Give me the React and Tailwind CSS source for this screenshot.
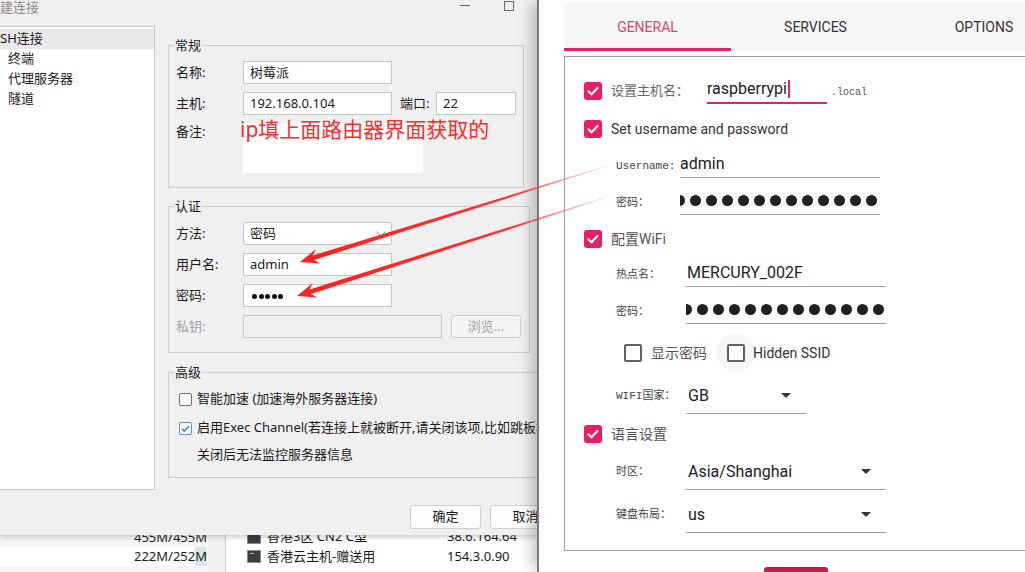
import React from "react";

const winFont = "font-['Noto_Sans','Noto_Sans_CJK_SC',sans-serif]";
const piFont = "font-['Roboto','Noto_Sans_CJK_SC',sans-serif]";
const monoFont = "font-['Liberation_Mono','Noto_Sans_CJK_SC',monospace]";

function arrowPoints(sx, sy, tx, ty) {
  const dx = sx - tx;
  const dy = sy - ty;
  const len = Math.hypot(dx, dy);
  const ux = dx / len;
  const uy = dy / len;
  const nx = -uy;
  const ny = ux;
  const p = (a, b) => [tx + ux * a + nx * b, ty + uy * a + ny * b];
  return [p(0, 0), p(19, 7.5), p(14, 2.3), p(len, 0.5), p(len, -0.5), p(14, -2.3), p(19, -7.5)]
    .map(([x, y]) => `${x.toFixed(1)},${y.toFixed(1)}`)
    .join(" ");
}

const arrows = [
  { id: "a1", sx: 607, sy: 166, tx: 300, ty: 262 },
  { id: "a2", sx: 607, sy: 197, tx: 297, ty: 296 },
];

function Arrows() {
  return (
    <svg className="pointer-events-none absolute left-0 top-0 z-20" width="1025" height="572">
      <defs>
        {arrows.map((a) => (
          <linearGradient key={a.id} id={a.id} gradientUnits="userSpaceOnUse" x1={a.tx} y1={a.ty} x2={a.sx} y2={a.sy}>
            <stop offset="0" stopColor="#ff1f1f" stopOpacity="1" />
            <stop offset="0.7" stopColor="#ff2a2a" stopOpacity="0.95" />
            <stop offset="1" stopColor="#ff6b6b" stopOpacity="0.15" />
          </linearGradient>
        ))}
      </defs>
      {arrows.map((a) => (
        <polygon key={a.id} points={arrowPoints(a.sx, a.sy, a.tx, a.ty)} fill={`url(#${a.id})`} />
      ))}
    </svg>
  );
}

function WinCheck({ checked }) {
  return (
    <span
      className={
        checked
          ? "flex h-[13px] w-[13px] shrink-0 items-center justify-center rounded-[2px] border border-[#5b8fd0] bg-white"
          : "flex h-[13px] w-[13px] shrink-0 items-center justify-center rounded-[2px] border border-[#6e6e6e] bg-white"
      }
    >
      {checked && (
        <svg width="11" height="11" viewBox="0 0 11 11">
          <path d="M2 5.8l2.3 2.4L9 3" fill="none" stroke="#2f78d6" strokeWidth="1.4" />
        </svg>
      )}
    </span>
  );
}

function FormRow({ label, children, muted, className = "" }) {
  return (
    <div className={`flex h-[23px] items-center ${className}`}>
      <span className={`w-[74px] shrink-0 pl-[7px] ${muted ? "text-[#a3a3a3]" : ""}`}>{label}</span>
      {children}
    </div>
  );
}

function Dialog() {
  return (
    <div className="relative z-[1] flex h-[535px] flex-col bg-[#f0f0f0] shadow-[0_2px_5px_rgba(0,0,0,0.2)]">
      <div className="flex h-[26px] items-start">
        <span className="leading-[15px] text-[#8a8a8a]">建连接</span>
        <span className="ml-auto mt-[5px] h-px w-[10px] bg-[#666]" />
        <span className="ml-[34px] mr-[23px] mt-[1px] h-[10px] w-[10px] border border-[#666]" />
      </div>

      <div className="flex">
        <div className="h-[464px] w-[155px] shrink-0 border-y border-r border-[#c8c8c8] bg-white pt-[2px]">
          <div className="flex h-[20px] items-center bg-[#e9e9e9]">SH连接</div>
          <div className="flex h-[20px] items-center pl-[8px]">终端</div>
          <div className="flex h-[20px] items-center pl-[8px]">代理服务器</div>
          <div className="flex h-[20px] items-center pl-[8px]">隧道</div>
        </div>

        <div className="ml-[13px] flex min-w-0 flex-col">
          <fieldset className="mt-[10px] w-[356px] border border-[#cdcdcd] pb-[14px]">
            <legend className="ml-[5px] px-[1px] leading-[18px]">常规</legend>
            <div className="pt-[7px]">
              <FormRow label="名称:">
                <div className="flex h-[23px] w-[149px] items-center border border-[#c5c5c5] bg-white px-[6px]">树莓派</div>
              </FormRow>
              <FormRow label="主机:" className="mt-[8px]">
                <div className="flex h-[23px] w-[149px] items-center border border-[#c5c5c5] bg-white px-[6px]">192.168.0.104</div>
                <span className="ml-[8px] w-[36px]">端口:</span>
                <div className="flex h-[23px] w-[80px] items-center border border-[#c5c5c5] bg-white px-[6px]">22</div>
              </FormRow>
              <div className="mt-[8px] flex items-start">
                <span className="w-[74px] shrink-0 pl-[7px] leading-[17px]">备注:</span>
                <div className="h-[50px] w-[180px] bg-white" />
              </div>
            </div>
          </fieldset>

          <fieldset className="mt-[9px] w-[362px] border border-[#cdcdcd] pb-[14px]">
            <legend className="ml-[5px] px-[1px] leading-[18px]">认证</legend>
            <div className="pt-[7px]">
              <FormRow label="方法:">
                <div className="flex h-[23px] w-[149px] items-center justify-between rounded-[3px] border border-[#c5c5c5] bg-white pl-[6px] pr-[5px]">
                  <span>密码</span>
                  <svg width="10" height="6" viewBox="0 0 10 6">
                    <path d="M0.5 0.5L5 5l4.5-4.5" fill="none" stroke="#8a8a8a" strokeWidth="1" />
                  </svg>
                </div>
              </FormRow>
              <FormRow label="用户名:" className="mt-[8px]">
                <div className="flex h-[23px] w-[149px] items-center border border-[#c5c5c5] bg-white px-[6px]">admin</div>
              </FormRow>
              <FormRow label="密码:" className="mt-[8px]">
                <div className="flex h-[23px] w-[149px] items-center gap-[1.5px] border border-[#c5c5c5] bg-white px-[8px] pt-[1px]">
                  {Array.from({ length: 5 }).map((_, i) => (
                    <span key={i} className="h-[5px] w-[5px] rounded-full bg-[#111]" />
                  ))}
                </div>
              </FormRow>
              <FormRow label="私钥:" muted className="mt-[8px]">
                <div className="h-[23px] w-[199px] border border-[#c8c8c8] bg-[#f0f0f0]" />
                <div className="ml-[9px] flex h-[23px] w-[70px] items-center justify-center rounded-[3px] border border-[#cfcfcf] bg-[#f5f5f5] text-[#a3a3a3]">浏览...</div>
              </FormRow>
            </div>
          </fieldset>

          <fieldset className="mt-[10px] w-[375px] border border-[#cdcdcd] pb-[12px]">
            <legend className="ml-[5px] px-[1px] leading-[18px]">高级</legend>
            <div className="pt-[8px]">
              <div className="flex h-[20px] items-center gap-[5px] pl-[10px]">
                <WinCheck />
                <span className="whitespace-nowrap">智能加速 (加速海外服务器连接)</span>
              </div>
              <div className="mt-[9px] flex h-[20px] items-center gap-[5px] pl-[10px]">
                <WinCheck checked />
                <span className="whitespace-nowrap">启用Exec Channel(若连接上就被断开,请关闭该项,比如跳板机)</span>
              </div>
              <div className="mt-[7px] flex h-[20px] items-center pl-[28px]">关闭后无法监控服务器信息</div>
            </div>
          </fieldset>
        </div>
      </div>

      <div className="mt-[15px] flex gap-[9px] pl-[410px]">
        <div className="flex h-[24px] w-[71px] shrink-0 items-center justify-center rounded-[3px] border border-[#cfcfcf] bg-[#fdfdfd]">确定</div>
        <div className="flex h-[24px] w-[71px] shrink-0 items-center justify-center rounded-[3px] border border-[#cfcfcf] bg-[#fdfdfd]">取消</div>
      </div>
    </div>
  );
}

function TermIcon() {
  return (
    <span className="flex h-[13px] w-[14px] shrink-0 items-start border border-[#8a8a8a] bg-[#3e3e3e] p-[2px]">
      <span className="h-px w-[4px] bg-[#bbb]" />
    </span>
  );
}

function BackApp() {
  return (
    <div className="flex flex-1 bg-white">
      <div className="flex w-[208px] shrink-0 flex-col">
        <div className="flex h-[12px] items-end justify-end overflow-hidden bg-[#f6f6f6] pr-[1px]">
          <span className="leading-[20px]">455M/455M</span>
        </div>
        <div className="flex h-[19px] items-center justify-end pr-[1px]">
          222M/252<span className="bg-[#d6e9e4]">M</span>
        </div>
        <div className="flex-1 bg-[#f6f6f6]" />
      </div>
      <div className="w-[18px] shrink-0 border-r border-[#cfcfcf] bg-[#f0f0f0]" />
      <div className="flex flex-1 flex-col">
        <div className="flex h-[12px] items-end overflow-hidden pl-[21px]">
          <div className="flex h-[20px] items-center">
            <TermIcon />
            <span className="ml-[6px] w-[180px]">香港3区 CN2 C型</span>
            <span>38.6.164.64</span>
          </div>
        </div>
        <div className="flex h-[19px] items-center pl-[21px]">
          <TermIcon />
          <span className="ml-[6px] w-[180px]">香港云主机-赠送用</span>
          <span>154.3.0.90</span>
        </div>
      </div>
    </div>
  );
}

function PinkCheck() {
  return (
    <span className="flex h-[18px] w-[18px] shrink-0 items-center justify-center rounded-[3px] bg-[#e91e63]">
      <svg width="14" height="14" viewBox="0 0 14 14">
        <path d="M2.5 7.3l3 3 6-6.3" fill="none" stroke="#fff" strokeWidth="2.2" strokeLinecap="round" strokeLinejoin="round" />
      </svg>
    </span>
  );
}

function Dots({ offset }) {
  return (
    <div className="flex h-[28px] w-[200px] items-center overflow-hidden border-b border-[#9e9e9e]">
      <div className={`flex shrink-0 gap-[5px] ${offset}`}>
        {Array.from({ length: 13 }).map((_, i) => (
          <span key={i} className="h-[11px] w-[11px] shrink-0 rounded-full bg-[#212121]" />
        ))}
      </div>
    </div>
  );
}

function Caret() {
  return <span className="h-0 w-0 border-x-[5px] border-t-[5px] border-x-transparent border-t-[#333]" />;
}

function SubLabel({ children, w = "w-[64px]" }) {
  return <span className={`${w} shrink-0 text-[11px] text-[#444] ${monoFont}`}>{children}</span>;
}

function ImagerPanel() {
  return (
    <div className={`relative z-10 flex-1 overflow-hidden border-l-2 border-[#7b7b7b] bg-white pl-[25px] pt-[3px] text-[#212121] shadow-[-9px_0_12px_-3px_rgba(0,0,0,0.22)] ${piFont}`}>
      <div className="flex h-[48px] w-[520px] bg-[#f7f7f7] text-[14px]">
        <div className="flex w-[167px] shrink-0 items-center justify-center border-b-[3px] border-[#e91e63] pt-[3px] text-[#ec3d6e]">GENERAL</div>
        <div className="flex w-[169px] shrink-0 items-center justify-center border-b-[3px] border-transparent pt-[3px] text-[#333]">SERVICES</div>
        <div className="flex w-[168px] shrink-0 items-center justify-center border-b-[3px] border-transparent pt-[3px] text-[#333]">OPTIONS</div>
      </div>

      <div className="mt-[5px] h-[495px] w-[520px] border border-[#a0a0a0] pt-[15px]">
        <div className="flex h-[38px] items-center pl-[19px]">
          <PinkCheck />
          <span className="ml-[9px] w-[96px] shrink-0 text-[13px] text-[#666]">设置主机名：</span>
          <div className="mb-[3px] flex h-[28px] w-[120px] items-center border-b-2 border-[#e91e63] text-[16px]">
            raspberrypi
            <span className="ml-px h-[18px] w-[2px] bg-[#e91e63]" />
          </div>
          <span className={`ml-[4px] mt-[2px] text-[10px] text-[#555] ${monoFont}`}>.local</span>
        </div>

        <div className="flex h-[38px] items-center pl-[19px]">
          <PinkCheck />
          <span className="ml-[9px] text-[14px] text-[#333]">Set username and password</span>
        </div>

        <div className="flex h-[36px] items-center pl-[51px]">
          <SubLabel>Username:</SubLabel>
          <div className="mb-[4px] flex h-[28px] w-[200px] items-center border-b border-[#9e9e9e] text-[16px]">admin</div>
        </div>

        <div className="flex h-[38px] items-center pl-[51px]">
          <SubLabel>密码：</SubLabel>
          <div className="mb-[4px]">
            <Dots offset="-ml-[6px]" />
          </div>
        </div>

        <div className="flex h-[34px] items-center pl-[19px]">
          <PinkCheck />
          <span className="ml-[9px] text-[14px] text-[#555]">配置WiFi</span>
        </div>

        <div className="flex h-[38px] items-center pl-[51px]">
          <SubLabel w="w-[70px]">热点名：</SubLabel>
          <div className="mb-[4px] flex h-[28px] w-[200px] items-center border-b border-[#9e9e9e] pl-[1px] text-[16px]">MERCURY_002F</div>
        </div>

        <div className="flex h-[36px] items-center pl-[51px]">
          <SubLabel w="w-[70px]">密码：</SubLabel>
          <div className="mb-[4px]">
            <Dots offset="-ml-[5px]" />
          </div>
        </div>

        <div className="flex h-[46px] items-center pl-[59px] text-[14px]">
          <span className="h-[18px] w-[18px] shrink-0 rounded-[2px] border-2 border-[#616161]" />
          <span className="ml-[9px] text-[#555]">显示密码</span>
          <span className="ml-[10px] flex h-[38px] w-[38px] shrink-0 items-center justify-center rounded-full bg-[#f6f6f6]">
            <span className="h-[18px] w-[18px] rounded-[2px] border-2 border-[#616161] bg-white" />
          </span>
          <span className="-ml-[2px] text-[#333]">Hidden SSID</span>
        </div>

        <div className="flex h-[40px] items-center pl-[51px]">
          <SubLabel w="w-[70px]">WIFI国家：</SubLabel>
          <div className="flex h-[36px] w-[120px] items-center justify-between border-b border-[#9e9e9e] pl-[2px] pr-[15px] text-[16px]">
            <span>GB</span>
            <Caret />
          </div>
        </div>

        <div className="flex h-[36px] items-center pl-[19px]">
          <PinkCheck />
          <span className="ml-[9px] text-[14px] text-[#555]">语言设置</span>
        </div>

        <div className="flex h-[40px] items-center pl-[51px]">
          <SubLabel w="w-[70px]">时区：</SubLabel>
          <div className="flex h-[36px] w-[200px] items-center justify-between border-b border-[#9e9e9e] pl-[2px] pr-[15px] text-[16px]">
            <span>Asia/Shanghai</span>
            <Caret />
          </div>
        </div>

        <div className="flex h-[46px] items-center pl-[51px]">
          <SubLabel w="w-[70px]">键盘布局：</SubLabel>
          <div className="flex h-[36px] w-[200px] items-center justify-between border-b border-[#9e9e9e] pl-[2px] pr-[15px] text-[16px]">
            <span>us</span>
            <Caret />
          </div>
        </div>
      </div>

      <div className="ml-[200px] mt-[16px] h-[30px] w-[64px] rounded-[3px] bg-[#c8194b]" />
    </div>
  );
}

export default function App() {
  return (
    <div className="relative flex h-[572px] w-[1025px] overflow-hidden bg-white">
      <div className={`flex w-[537px] shrink-0 flex-col overflow-hidden text-[13px] text-[#1a1a1a] ${winFont}`}>
        <Dialog />
        <BackApp />
      </div>
      <ImagerPanel />
      <Arrows />
      <div className={`absolute left-[240px] top-[114px] z-20 whitespace-nowrap text-[21px] leading-[30px] text-[#ff2b2b] ${winFont}`}>
        ip填上面路由器界面获取的
      </div>
    </div>
  );
}
